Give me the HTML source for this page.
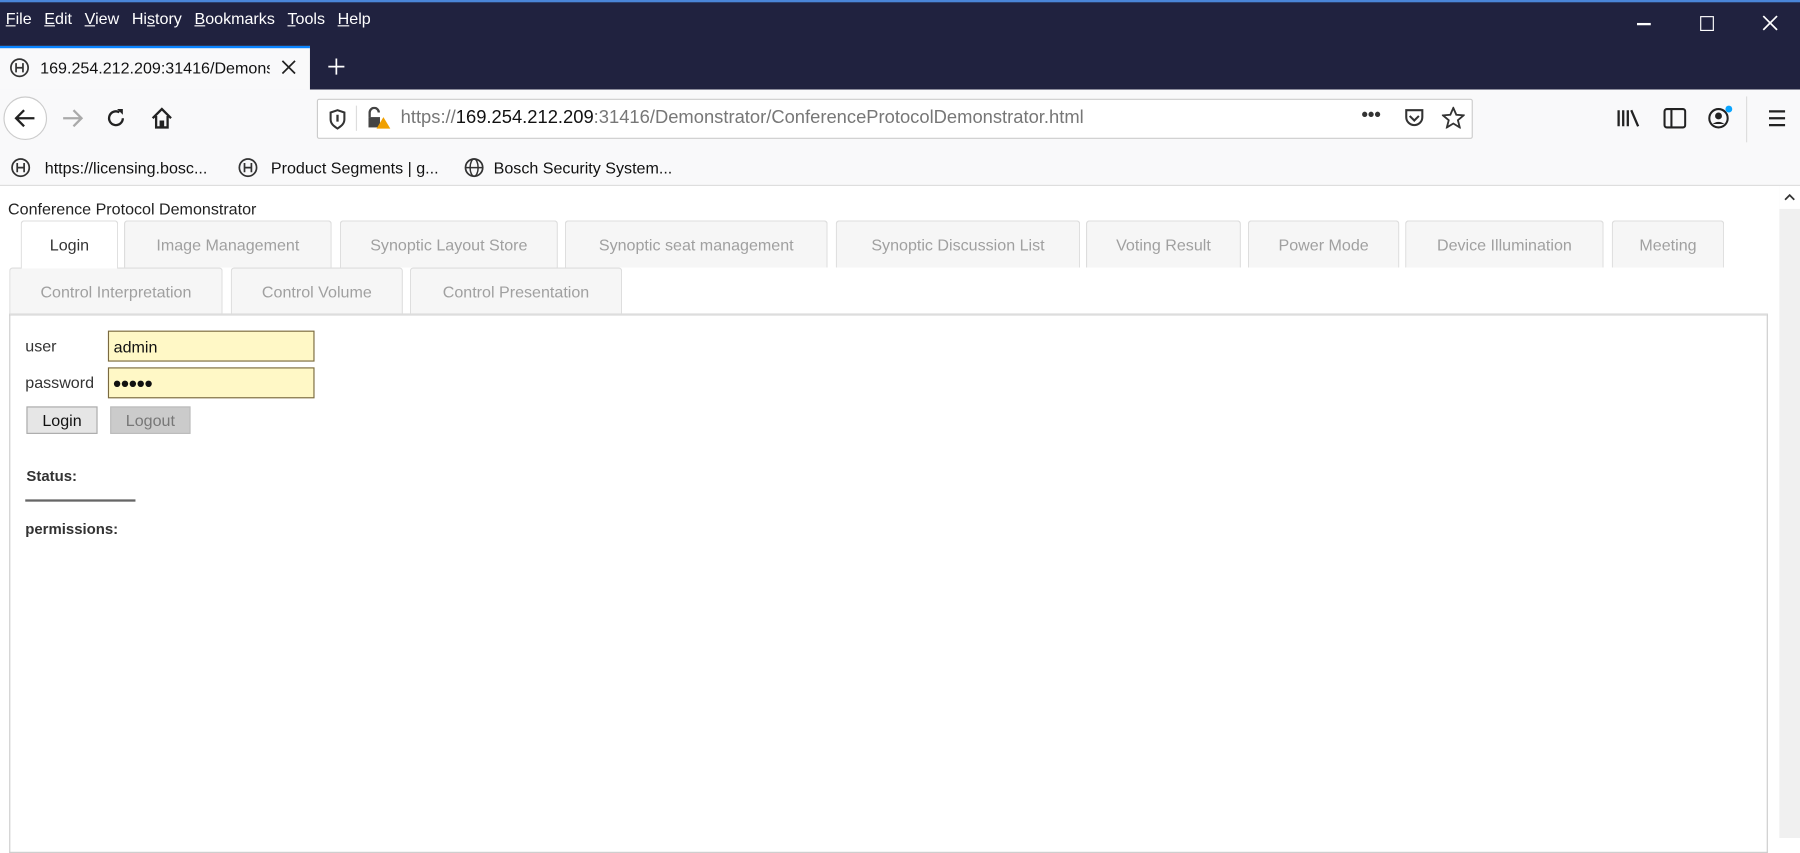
<!DOCTYPE html>
<html><head><meta charset="utf-8"><style>
html,body{margin:0;padding:0;width:1800px;height:838px;overflow:hidden;background:#fff}
#w{position:absolute;left:0;top:0;width:1568px;height:730px;transform:scale(1.14796);transform-origin:0 0;font-family:"Liberation Sans",sans-serif;}
.a{position:absolute}
.menu span{color:#fff;font-size:14px;margin-right:11px}
.menu u{text-decoration:underline}
.tab{position:absolute;background:#f6f6f6;border:1px solid #ddd;border-bottom:none;border-radius:3px 3px 0 0;color:#a0a0a0;font-size:14px;text-align:center;box-sizing:border-box;line-height:40px}
svg{position:absolute}
</style></head><body><div id="w">
<!-- title bar -->
<div class="a" style="left:0;top:0;width:1568px;height:78px;background:#20223f"></div>
<div class="a" style="left:0;top:0;width:1568px;height:2px;background:#4a86d8"></div>
<div class="a menu" style="left:5px;top:8px"><span><u>F</u>ile</span><span><u>E</u>dit</span><span><u>V</u>iew</span><span>Hi<u>s</u>tory</span><span><u>B</u>ookmarks</span><span><u>T</u>ools</span><span><u>H</u>elp</span></div>
<div class="a" style="left:1426px;top:20px;width:12px;height:1.5px;background:#fff"></div>
<div class="a" style="left:1481px;top:14px;width:10px;height:11px;border:1.5px solid #fff"></div>
<svg style="left:1535px;top:13px" width="14" height="14"><path d="M1 1L13 13M13 1L1 13" stroke="#fff" stroke-width="1.5"/></svg>
<!-- tab -->
<div class="a" style="left:0;top:40px;width:270px;height:38px;background:#f9f9fa"></div>
<div class="a" style="left:0;top:40px;width:270px;height:2px;background:#0a84ff"></div>
<svg style="left:8px;top:50px" width="18" height="18"><circle cx="9" cy="9" r="7.5" fill="none" stroke="#333" stroke-width="1.5"/><path d="M6 5v8M12 5v8M6 9h6" stroke="#333" stroke-width="1.5"/></svg>
<div class="a" style="left:35px;top:51px;font-size:14px;color:#111;width:200px;overflow:hidden;white-space:nowrap">169.254.212.209:31416/Demonst</div>
<svg style="left:245px;top:52px" width="13" height="13"><path d="M1 1L12 12M12 1L1 12" stroke="#222" stroke-width="1.5"/></svg>
<svg style="left:285px;top:50px" width="16" height="16"><path d="M8 1v14M1 8h14" stroke="#fff" stroke-width="1.5"/></svg>
<!-- nav bar -->
<div class="a" style="left:0;top:78px;width:1568px;height:84px;background:#f9f9fa"></div>
<div class="a" style="left:3px;top:84px;width:36px;height:36px;border-radius:50%;border:1px solid #ccc;background:#fff"></div>
<svg style="left:12px;top:94px" width="20" height="18"><path d="M18 9H3M9 2L2 9l7 7" fill="none" stroke="#222" stroke-width="2"/></svg>
<svg style="left:53px;top:94px" width="20" height="18"><path d="M2 9h15M11 2l7 7-7 7" fill="none" stroke="#aaa" stroke-width="2"/></svg>
<svg style="left:92px;top:94px" width="18" height="18"><path d="M15 9A6 6 0 1 1 12 3.8" fill="none" stroke="#222" stroke-width="2"/><path d="M10 1h5v5z" fill="#222"/></svg>
<svg style="left:131px;top:93px" width="20" height="20"><path d="M2 10L10 2l8 8M5 8v10h10V8M9 18v-5h2v5" fill="none" stroke="#222" stroke-width="2"/></svg>
<div class="a" style="left:276px;top:86px;width:1007px;height:35px;background:#fff;border:1px solid #ccc;box-sizing:border-box;border-radius:2px"></div>
<svg style="left:286px;top:95px" width="16" height="18"><path d="M8 1L2 3v6c0 4 3 6 6 8 3-2 6-4 6-8V3z" fill="none" stroke="#333" stroke-width="1.8"/><path d="M8 5v6" stroke="#333" stroke-width="2"/></svg>
<div class="a" style="left:310px;top:92px;width:1px;height:22px;background:#ddd"></div>
<svg style="left:319px;top:93px" width="22" height="20"><path d="M3 9V5a4 4 0 0 1 8 0" fill="none" stroke="#444" stroke-width="2"/><rect x="2" y="9" width="10" height="9" fill="#444"/><path d="M15 9l6 10H9z" fill="#f0a000"/></svg>
<div class="a" style="left:349px;top:94px;font-size:16px;color:#777;white-space:nowrap">https://<span style="color:#111">169.254.212.209</span>:31416/Demonstrator/ConferenceProtocolDemonstrator.html</div>
<div class="a" style="left:1186px;top:92px;font-size:16px;color:#333;font-weight:bold">•••</div>
<svg style="left:1223px;top:94px" width="18" height="17"><path d="M2 2h14v6a7 7 0 0 1-14 0z" fill="none" stroke="#333" stroke-width="1.8"/><path d="M5 7l4 4 4-4" fill="none" stroke="#333" stroke-width="1.8"/></svg>
<svg style="left:1256px;top:93px" width="20" height="19"><path d="M10 1l2.6 6 6.4.5-5 4.2 1.6 6.3L10 14.6 4.4 18 6 11.7 1 7.5l6.4-.5z" fill="none" stroke="#333" stroke-width="1.6"/></svg>
<svg style="left:1408px;top:94px" width="22" height="18"><path d="M2 2v14M6 2v14M10 2v14M13 2l6 14" stroke="#222" stroke-width="2"/></svg>
<svg style="left:1449px;top:94px" width="20" height="18"><rect x="1" y="1" width="18" height="16" rx="2" fill="none" stroke="#222" stroke-width="1.8"/><path d="M7 1v16" stroke="#222" stroke-width="1.8"/></svg>
<svg style="left:1487px;top:91px" width="24" height="22"><circle cx="10" cy="12" r="8" fill="none" stroke="#222" stroke-width="1.8"/><circle cx="10" cy="10" r="3" fill="#222"/><path d="M5 17a6 4 0 0 1 10 0" fill="#222"/><circle cx="19" cy="4" r="3" fill="#0aa5ff"/></svg>
<div class="a" style="left:1521px;top:84px;width:1px;height:40px;background:#ddd"></div>
<svg style="left:1540px;top:95px" width="16" height="16"><path d="M1 2h14M1 8h14M1 14h14" stroke="#222" stroke-width="2"/></svg>
<!-- bookmarks -->
<svg style="left:9px;top:137px" width="18" height="18"><circle cx="9" cy="9" r="7.5" fill="none" stroke="#333" stroke-width="1.5"/><path d="M6 5v8M12 5v8M6 9h6" stroke="#333" stroke-width="1.5"/></svg>
<div class="a" style="left:39px;top:138px;font-size:14px;color:#111">https://licensing.bosc...</div>
<svg style="left:207px;top:137px" width="18" height="18"><circle cx="9" cy="9" r="7.5" fill="none" stroke="#333" stroke-width="1.5"/><path d="M6 5v8M12 5v8M6 9h6" stroke="#333" stroke-width="1.5"/></svg>
<div class="a" style="left:236px;top:138px;font-size:14px;color:#111">Product Segments | g...</div>
<svg style="left:404px;top:137px" width="18" height="18"><circle cx="9" cy="9" r="7.5" fill="none" stroke="#333" stroke-width="1.5"/><ellipse cx="9" cy="9" rx="3.5" ry="7.5" fill="none" stroke="#333" stroke-width="1.3"/><path d="M1.5 9h15" stroke="#333" stroke-width="1.3"/></svg>
<div class="a" style="left:430px;top:138px;font-size:14px;color:#111">Bosch Security System...</div>
<div class="a" style="left:0;top:161px;width:1568px;height:1px;background:#ddd"></div>
<!-- scrollbar -->
<div class="a" style="left:1550px;top:162px;width:18px;height:568px;background:#f0f0f0"></div>
<div class="a" style="left:1550px;top:162px;width:18px;height:20px;background:#fff"></div>
<svg style="left:1554px;top:168px" width="10" height="8"><path d="M1 6l4-4 4 4" fill="none" stroke="#333" stroke-width="1.5"/></svg>
<!-- content -->
<div class="a" style="left:7px;top:174px;font-size:14px;color:#222">Conference Protocol Demonstrator</div>
<div class="tab" style="left:18px;top:192px;width:85px;height:42px;background:#fff;color:#333;z-index:2">Login</div>
<div class="tab" style="left:108px;top:192px;width:181px;height:41px">Image Management</div>
<div class="tab" style="left:296px;top:192px;width:190px;height:41px">Synoptic Layout Store</div>
<div class="tab" style="left:492px;top:192px;width:229px;height:41px">Synoptic seat management</div>
<div class="tab" style="left:728px;top:192px;width:213px;height:41px">Synoptic Discussion List</div>
<div class="tab" style="left:946px;top:192px;width:135px;height:41px">Voting Result</div>
<div class="tab" style="left:1087px;top:192px;width:132px;height:41px">Power Mode</div>
<div class="tab" style="left:1224px;top:192px;width:173px;height:41px">Device Illumination</div>
<div class="tab" style="left:1404px;top:192px;width:98px;height:41px">Meeting</div>
<div class="tab" style="left:8px;top:233px;width:186px;height:41px">Control Interpretation</div>
<div class="tab" style="left:201px;top:233px;width:150px;height:41px">Control Volume</div>
<div class="tab" style="left:357px;top:233px;width:185px;height:41px">Control Presentation</div>
<div class="a" style="left:8px;top:273px;width:1532px;height:470px;border:1px solid #ccc;box-sizing:border-box;border-width:2px 1px 1px 1px;border-color:#ddd #ccc #ccc #ccc"></div>
<div class="a" style="left:22px;top:293px;font-size:14px;color:#333">user</div>
<div class="a" style="left:94px;top:288px;width:180px;height:27px;background:#fff8c6;border:1px solid #7a6a40;box-sizing:border-box;font-size:14px;color:#111;padding:5px 0 0 4px">admin</div>
<div class="a" style="left:22px;top:325px;font-size:14px;color:#333">password</div>
<div class="a" style="left:94px;top:320px;width:180px;height:27px;background:#fff8c6;border:1px solid #7a6a40;box-sizing:border-box;font-size:13px;color:#111;padding:5px 0 0 3px;letter-spacing:-1px">●●●●●</div>
<div class="a" style="left:23px;top:354px;width:62px;height:24px;background:#e6e6e6;border:1px solid #aaa;box-sizing:border-box;font-size:14px;color:#111;text-align:center;line-height:22px">Login</div>
<div class="a" style="left:96px;top:354px;width:70px;height:24px;background:#cbcbcb;border:1px solid #bbb;box-sizing:border-box;font-size:14px;color:#777;text-align:center;line-height:22px">Logout</div>
<div class="a" style="left:23px;top:407px;font-size:13px;color:#333;font-weight:bold">Status:</div>
<div class="a" style="left:22px;top:435px;width:96px;height:2px;background:#666"></div>
<div class="a" style="left:22px;top:453px;font-size:13px;color:#333;font-weight:bold">permissions:</div>
</div></body></html>
